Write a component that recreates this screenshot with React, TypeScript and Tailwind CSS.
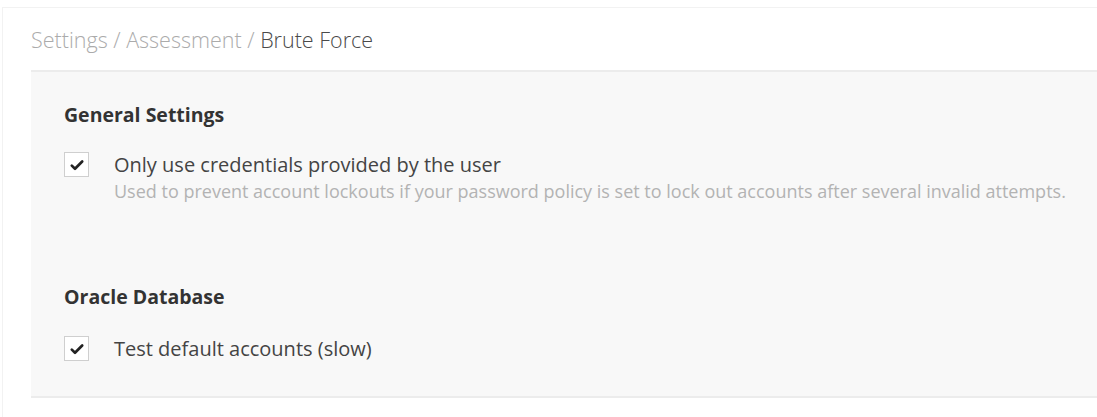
import React from "react";

function CheckMark() {
  return (
    <svg viewBox="0 0 16 16" className="w-[16px] h-[16px]" fill="none">
      <path d="M2.8 8.6l3.2 3.1 7.2-7.2" stroke="#222" strokeWidth="2.7" strokeLinecap="round" strokeLinejoin="round" />
    </svg>
  );
}

function Checkbox({ label, hint }: { label: string; hint?: string }) {
  return (
    <div className="flex items-start">
      <div className="flex-shrink-0 w-[25px] h-[25px] bg-white border border-[#cfcfcf] flex items-center justify-center">
        <CheckMark />
      </div>
      <div className="ml-[25px]">
        <div className="text-[20px] leading-[25px] text-[#444]">{label}</div>
        {hint && <div className="mt-[3px] text-[18px] leading-[22px] text-[#b3b3b3]">{hint}</div>}
      </div>
    </div>
  );
}

export default function App() {
  return (
    <div className="w-[1097px] h-[417px] bg-white overflow-hidden" style={{ fontFamily: '"Open Sans", "Noto Sans", sans-serif' }}>
      <div className="mt-[7px] ml-[2px] h-[420px] border-t border-l border-[#f2f2f2] pl-[28px]">
        <div className="h-[62px] flex items-center pt-[2px] text-[21.5px] font-light text-[#ababab]">
          <span>Settings / Assessment /&nbsp;</span>
          <span className="text-[#4a4a4a]">Brute Force</span>
        </div>
        <div className="h-[328px] bg-[#f8f8f8] border-t-2 border-b-2 border-[#ececec] pl-[33px] pt-[31px]">
          <h3 className="text-[19.5px] leading-[24px] font-bold text-[#333]">General Settings</h3>
          <div className="mt-[25px]">
            <Checkbox
              label="Only use credentials provided by the user"
              hint="Used to prevent account lockouts if your password policy is set to lock out accounts after several invalid attempts."
            />
          </div>
          <h3 className="mt-[83px] text-[19.5px] leading-[24px] font-bold text-[#333]">Oracle Database</h3>
          <div className="mt-[27px]">
            <Checkbox label="Test default accounts (slow)" />
          </div>
        </div>
      </div>
    </div>
  );
}
